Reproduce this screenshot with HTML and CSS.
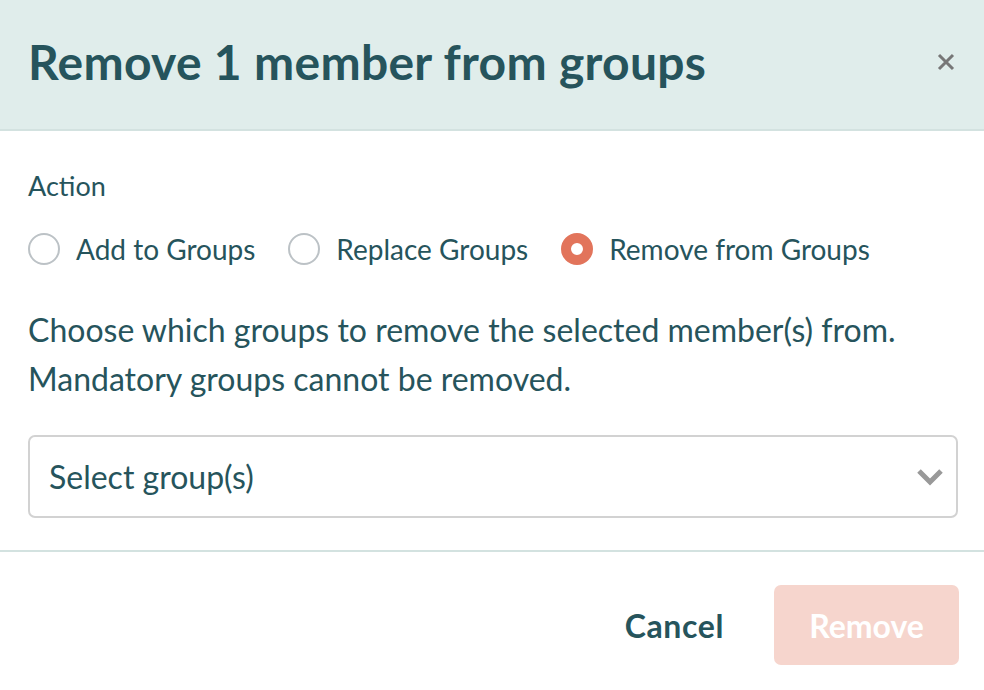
FILE: index.html
```html
<!DOCTYPE html>
<html lang="en">
<head>
    <meta charset="UTF-8">
    <meta name="viewport" content="width=device-width, initial-scale=1.0">
    <title>Remove member from groups</title>
    <link rel="stylesheet" href="styles.css">
</head>
<body>
    <div class="modal">
        <div class="modal-header">
            <h1>Remove 1 member from groups</h1>
            <button class="close" aria-label="Close">
                <svg width="18" height="18" viewBox="0 0 18 18"><path d="M2 2 L16 16 M16 2 L2 16" stroke="#777" stroke-width="3" fill="none"/></svg>
            </button>
        </div>
        <div class="modal-body">
            <div class="field-label">Action</div>
            <div class="radio-row">
                <label class="radio"><span class="dot"></span>Add to Groups</label>
                <label class="radio"><span class="dot"></span>Replace Groups</label>
                <label class="radio checked"><span class="dot"></span>Remove from Groups</label>
            </div>
            <p class="hint">Choose which groups to remove the selected member(s) from.<br>Mandatory groups cannot be removed.</p>
            <div class="select">
                <span>Select group(s)</span>
                <svg width="28" height="20" viewBox="0 0 28 20"><path d="M3 4 L14 15 L25 4" stroke="#999" stroke-width="5" fill="none" stroke-linejoin="miter"/></svg>
            </div>
        </div>
        <div class="modal-footer">
            <button class="btn-cancel">Cancel</button>
            <button class="btn-remove" disabled>Remove</button>
        </div>
    </div>
</body>
</html>
```

FILE: styles.css
```css
body {
    margin: 0;
    font-family: Lato, "Open Sans", sans-serif;
    color: #26545c;
    background: #fff;
}
.modal {
    width: 984px;
}
.modal-header {
    display: flex;
    align-items: center;
    justify-content: space-between;
    height: 131px;
    padding: 0 28px 6px;
    background-color: #e0edeb;
    border-bottom: 2px solid #d3e2e0;
    box-sizing: border-box;
}
.modal-header h1 {
    margin: 0;
    font-size: 48px;
    font-weight: 700;
    letter-spacing: 0.3px;
}
.close {
    background: none;
    border: none;
    padding: 0;
    margin-right: 1px;
    cursor: pointer;
    display: flex;
}
.modal-body {
    padding: 40px 26px 32px 28px;
    border-bottom: 2px solid #d3e2e0;
}
.field-label {
    font-size: 27px;
    line-height: 30px;
}
.radio-row {
    display: flex;
    gap: 33px;
    margin-top: 32px;
}
.radio {
    display: flex;
    align-items: center;
    font-size: 28px;
    line-height: 32px;
}
.dot {
    width: 28px;
    height: 28px;
    border: 2px solid #bcc2c6;
    border-radius: 50%;
    margin-right: 16px;
    box-sizing: content-box;
    background: #fff;
}
.radio.checked .dot {
    border: 10px solid #e2745b;
    width: 12px;
    height: 12px;
}
.hint {
    margin: 40px 0 32px;
    font-size: 32px;
    line-height: 49px;
}
.select {
    display: flex;
    align-items: center;
    justify-content: space-between;
    height: 83px;
    box-sizing: border-box;
    border: 2px solid #d2d2d2;
    border-radius: 7px;
    padding: 0 12px 0 19px;
    font-size: 32px;
}
.modal-footer {
    display: flex;
    justify-content: flex-end;
    align-items: center;
    gap: 50px;
    padding: 33px 25px 0 0;
}
.btn-cancel {
    background: none;
    border: none;
    font-family: inherit;
    font-size: 32px;
    font-weight: 700;
    letter-spacing: 0.6px;
    color: #26545c;
    padding: 0;
}
.btn-remove {
    width: 185px;
    height: 80px;
    border: none;
    border-radius: 7px;
    background-color: #f6d5cd;
    color: #fff;
    font-family: inherit;
    font-size: 32px;
    font-weight: 700;
}
```
